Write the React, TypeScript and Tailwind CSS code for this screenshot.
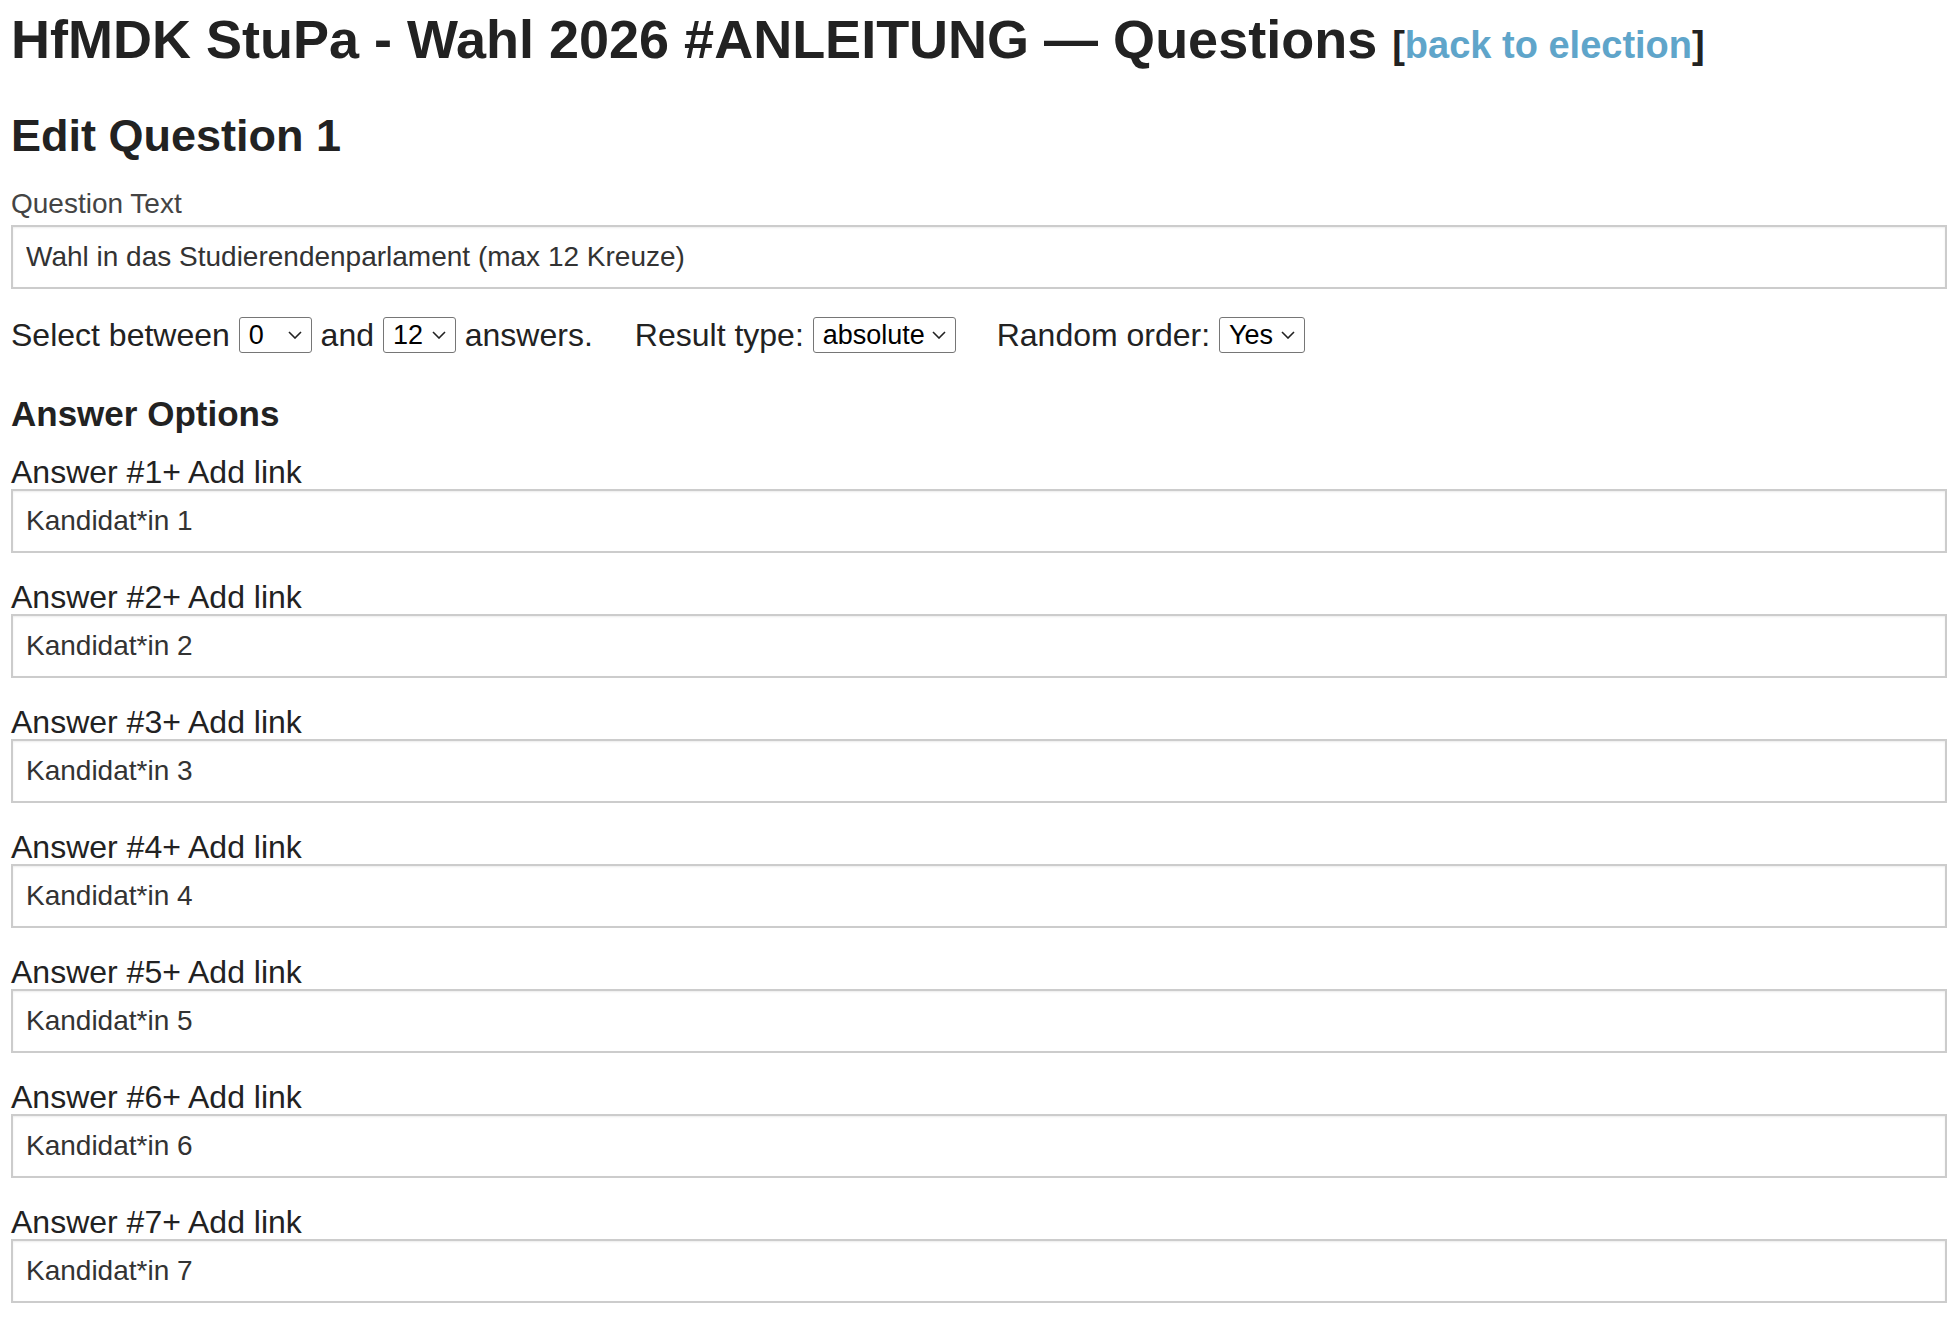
import React from 'react';

const answers = [1, 2, 3, 4, 5, 6, 7];

const FONT = "font-['Liberation_Sans',Arial,Helvetica,sans-serif]";

const inputCls = `block w-full h-[64px] border-2 border-[#cccccc] bg-white px-[13px] text-[28px] text-[#333] shadow-[inset_0_1px_2px_rgba(0,0,0,0.08)] outline-none ${FONT}`;

const Chevron: React.FC = () => (
  <svg
    className="pointer-events-none absolute right-[10px] top-[14px] w-[14px] h-[8px]"
    viewBox="0 0 14 8"
    fill="none"
    stroke="#222"
    strokeWidth="1.6"
  >
    <path d="M1 1l6 6 6-6" />
  </svg>
);

interface SelectProps {
  width: string;
  value: string;
  options: string[];
}

const Select: React.FC<SelectProps> = ({ width, value, options }) => (
  <span className={`relative inline-flex ${width}`}>
    <select
      className={`appearance-none w-full h-[36px] border border-[#767676] rounded-[3px] bg-white pl-[9px] text-[27px] leading-[34px] text-black ${FONT}`}
      defaultValue={value}
    >
      {options.map(o => (
        <option key={o} value={o}>{o}</option>
      ))}
    </select>
    <Chevron />
  </span>
);

const counts = Array.from({ length: 13 }, (_, i) => String(i));

const App: React.FC = () => {
  return (
    <div className={`bg-white pl-[11px] pt-[8px] text-[#222] ${FONT}`}>
      {/* Page title */}
      <h1 className="text-[54px] leading-[62px] font-bold whitespace-nowrap">
        HfMDK StuPa - Wahl 2026 #ANLEITUNG — Questions{' '}
        <span className="text-[38px] leading-none">
          [<a href="#" className="text-[#5fa5ca]">back to election</a>]
        </span>
      </h1>

      <h2 className="mt-[40px] text-[45px] leading-[52px] font-bold">Edit Question 1</h2>

      {/* Question text */}
      <label className="block mt-[26px] text-[28px] leading-[32px] text-[#444]">Question Text</label>
      <input
        className={`${inputCls} mt-[5px]`}
        defaultValue="Wahl in das Studierendenparlament (max 12 Kreuze)"
      />

      {/* Settings row */}
      <div className="mt-[28px] flex items-center text-[32px] leading-[36px] whitespace-nowrap">
        <span>Select between&nbsp;</span>
        <Select width="w-[73px]" value="0" options={counts} />
        <span>&nbsp;and&nbsp;</span>
        <Select width="w-[73px]" value="12" options={counts} />
        <span>&nbsp;answers.</span>
        <span className="ml-[42px]">Result type:&nbsp;</span>
        <Select width="w-[143px]" value="absolute" options={['absolute', 'relative']} />
        <span className="ml-[41px]">Random order:&nbsp;</span>
        <Select width="w-[86px]" value="Yes" options={['Yes', 'No']} />
      </div>

      <h3 className="mt-[41px] text-[35px] leading-[40px] font-bold">Answer Options</h3>

      {/* Answers */}
      <div className="mt-[21px] flex flex-col">
        {answers.map(n => (
          <div key={n} className="mb-[27px]">
            <label className="block text-[32px] leading-[34px]">
              Answer #{n}
              <a href="#" className="text-[#222]">+ Add link</a>
            </label>
            <input className={inputCls} defaultValue={`Kandidat*in ${n}`} />
          </div>
        ))}
      </div>
    </div>
  );
};

export default App;
